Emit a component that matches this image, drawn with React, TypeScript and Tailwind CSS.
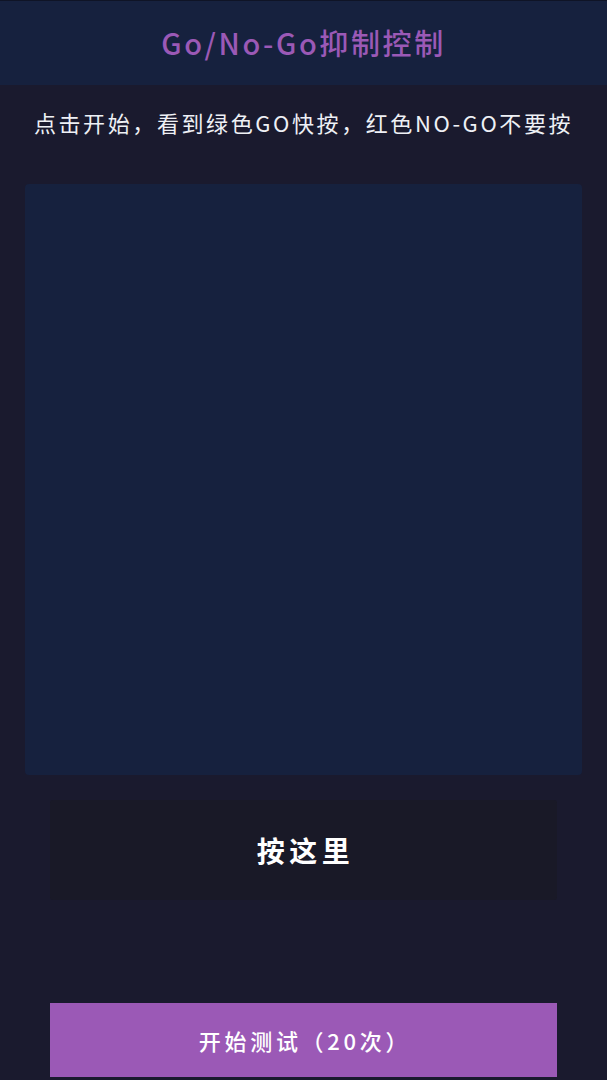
export default function App() {
  const font = { fontFamily: '"Noto Sans CJK SC", "Noto Sans", sans-serif' };
  return (
    <div className="w-[607px] h-[1080px] bg-[#1a1a2e] flex flex-col overflow-hidden" style={font}>
      <div className="h-[85px] bg-[#16213e] flex items-center justify-center border-t border-[#0f1426]">
        <h1 className="text-[29px] font-medium text-[#9b59b6] tracking-[2.6px]">Go/No-Go抑制控制</h1>
      </div>
      <p className="mt-[22px] text-center text-[22px] leading-[30px] text-[#eef0f5] tracking-[2.6px]">
        点击开始，看到绿色GO快按，红色NO-GO不要按
      </p>
      <div className="mx-[25px] mt-[47px] h-[591px] rounded-[4px] bg-[#16213e]" />
      <div className="mx-[50px] mt-[25px] h-[100px] rounded-[3px] bg-[#191927] flex items-center justify-center">
        <span className="text-[28px] font-bold text-white tracking-[4.5px] pl-[4px]">按这里</span>
      </div>
      <div className="mx-[50px] mt-[103px] h-[74px] bg-[#9b59b6] flex items-center justify-center">
        <span className="text-[22px] font-medium text-white tracking-[3.7px] pl-[3px]">开始测试（20次）</span>
      </div>
    </div>
  );
}
